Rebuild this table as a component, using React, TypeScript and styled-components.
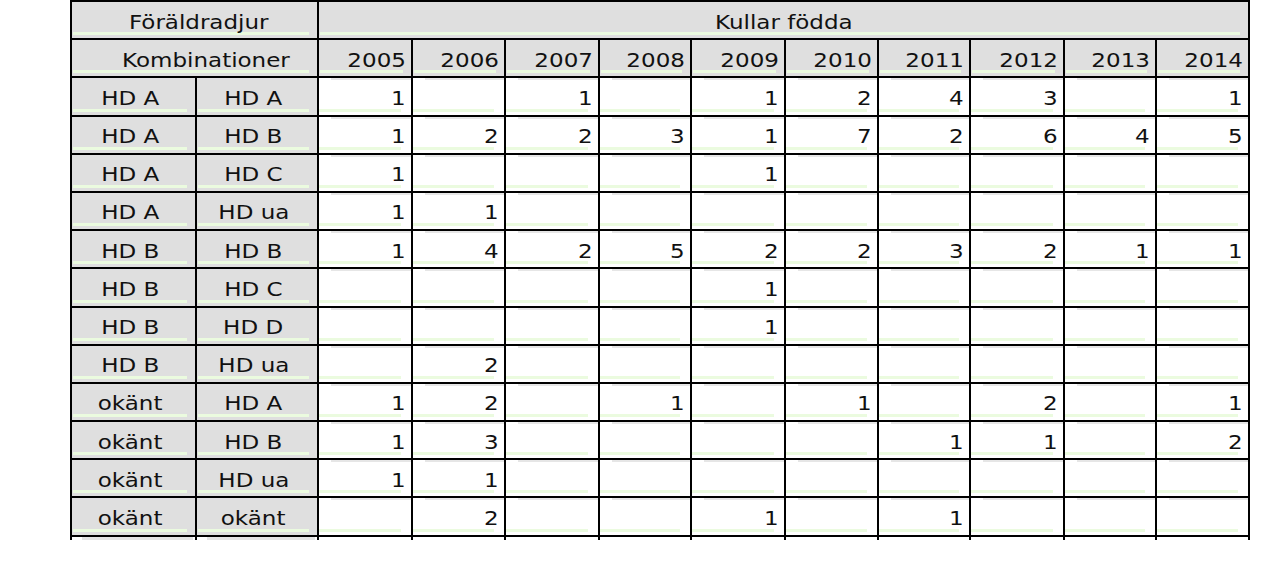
import React from 'react';
import styled, { createGlobalStyle } from 'styled-components';

const GlobalStyle = createGlobalStyle`
  html, body {
    margin: 0;
    padding: 0;
    background: #fff;
  }
  body {
    font-family: 'DejaVu Sans', Verdana, sans-serif;
  }
`;

const GRAY = '#dfdfdf';
const GREEN = '#ebfbdf';

const Page = styled.div`
  padding-left: 70px;
  width: 1277px;
  height: 577px;
  box-sizing: border-box;
  overflow: hidden;
`;

const Grid = styled.div`
  display: grid;
  width: 1180px;
  box-sizing: border-box;
  grid-template-columns: 123px 120px 92px 91px 92px 90px 92px 91px 90px 92px 90px 91px;
  grid-template-rows: repeat(14, 36.2px) 3px;
  gap: 2px;
  padding: 2px 2px 0 2px;
  background: #000;
`;

const Cell = styled.div<{ $span?: number; $align?: 'center' | 'right'; $indent?: number; $pr?: number }>`
  grid-column: span ${(p) => p.$span ?? 1};
  display: flex;
  align-items: flex-start;
  justify-content: ${(p) => (p.$align === 'right' ? 'flex-end' : 'center')};
  padding: 8.5px ${(p) => p.$pr ?? 5}px 0 ${(p) => p.$indent ?? 0}px;
  box-sizing: border-box;
  font-size: 20px;
  line-height: 22px;
  color: #111;
  white-space: nowrap;
  background:
    linear-gradient(${GREEN}, ${GREEN}) no-repeat left 1px bottom 3px / calc(100% - 9px) 3px,
    ${GRAY};
`;

const ValueCell = styled(Cell)`
  background:
    linear-gradient(${GREEN}, ${GREEN}) no-repeat left 0 bottom 3px / calc(100% - 10px) 3px,
    linear-gradient(#e6e6e6, #e6e6e6) no-repeat right 0 top 0 / calc(100% - 12px) 2px,
    #fff;
`;

// the source text is drawn slightly wide
const Text = styled.span<{ $origin?: 'center' | 'right' }>`
  display: inline-block;
  transform: scaleX(1.15);
  transform-origin: ${(p) => (p.$origin === 'right' ? 'right' : 'center')} center;
`;

const Sliver = styled.div<{ $gray?: boolean }>`
  background: ${(p) =>
    p.$gray ? `linear-gradient(#e4e4e4, #e4e4e4) no-repeat left 10px top 0 / calc(100% - 12px) 100%, #fff` : '#fff'};
`;

const years = [2005, 2006, 2007, 2008, 2009, 2010, 2011, 2012, 2013, 2014];

type Row = { a: string; b: string; v: (number | null)[] };

const _ = null;
const rows: Row[] = [
  { a: 'HD A', b: 'HD A', v: [1, _, 1, _, 1, 2, 4, 3, _, 1] },
  { a: 'HD A', b: 'HD B', v: [1, 2, 2, 3, 1, 7, 2, 6, 4, 5] },
  { a: 'HD A', b: 'HD C', v: [1, _, _, _, 1, _, _, _, _, _] },
  { a: 'HD A', b: 'HD ua', v: [1, 1, _, _, _, _, _, _, _, _] },
  { a: 'HD B', b: 'HD B', v: [1, 4, 2, 5, 2, 2, 3, 2, 1, 1] },
  { a: 'HD B', b: 'HD C', v: [_, _, _, _, 1, _, _, _, _, _] },
  { a: 'HD B', b: 'HD D', v: [_, _, _, _, 1, _, _, _, _, _] },
  { a: 'HD B', b: 'HD ua', v: [_, 2, _, _, _, _, _, _, _, _] },
  { a: 'okänt', b: 'HD A', v: [1, 2, _, 1, _, 1, _, 2, _, 1] },
  { a: 'okänt', b: 'HD B', v: [1, 3, _, _, _, _, 1, 1, _, 2] },
  { a: 'okänt', b: 'HD ua', v: [1, 1, _, _, _, _, _, _, _, _] },
  { a: 'okänt', b: 'okänt', v: [_, 2, _, _, 1, _, 1, _, _, _] },
];

const App = () => {
  return (
    <Page>
      <GlobalStyle />
      <Grid>
        <Cell $span={2} $indent={9} $pr={0}>
          <Text>Föräldradjur</Text>
        </Cell>
        <Cell $span={10} $pr={0}>
          <Text>Kullar födda</Text>
        </Cell>

        <Cell $span={2} $indent={23} $pr={0}>
          <Text>Kombinationer</Text>
        </Cell>
        {years.map((y) => (
          <Cell key={y} $align="right">
            <Text $origin="right">{y}</Text>
          </Cell>
        ))}

        {rows.map((r, i) => (
          <React.Fragment key={i}>
            <Cell $pr={7}>
              <Text>{r.a}</Text>
            </Cell>
            <Cell $pr={7}>
              <Text>{r.b}</Text>
            </Cell>
            {r.v.map((n, j) => (
              <ValueCell key={j} $align="right">
                {n !== null && <Text $origin="right">{n}</Text>}
              </ValueCell>
            ))}
          </React.Fragment>
        ))}

        <Sliver $gray />
        <Sliver $gray />
        {years.map((y) => (
          <Sliver key={y} />
        ))}
      </Grid>
    </Page>
  );
};

export default App;
